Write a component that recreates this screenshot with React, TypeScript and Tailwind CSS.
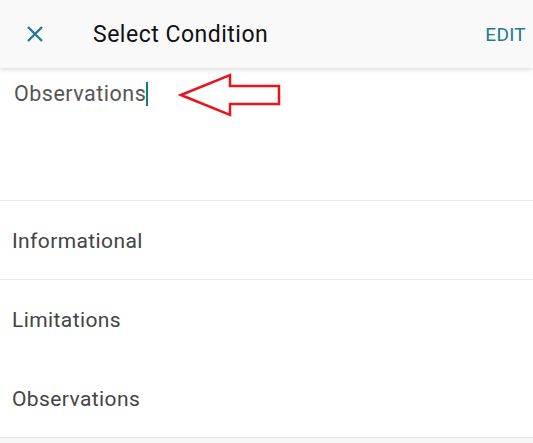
import React from "react";

const items = ["Informational", "Limitations", "Observations"];

export default function App() {
  return (
    <div
      className="w-[533px] h-[443px] bg-white overflow-hidden flex flex-col"
      style={{ fontFamily: "Roboto, 'Liberation Sans', sans-serif" }}
    >
      {/* Header */}
      <div className="h-[68px] shrink-0 bg-[#f9f9f9] flex items-center shadow-[0_2px_4px_rgba(0,0,0,0.12)] relative z-10">
        <div className="w-[70px] flex justify-center">
          <svg width="18" height="18" viewBox="0 0 18 18">
            <path d="M2 2L16 16M16 2L2 16" stroke="#1f7a93" strokeWidth="2.4" fill="none" />
          </svg>
        </div>
        <div className="ml-[23px] pt-[2px] text-[23px] tracking-[0.5px] text-[#111]">Select Condition</div>
        <div className="ml-auto mr-[7px] pt-[2px] text-[19px] tracking-[0.3px] text-[#1f7a93]">EDIT</div>
      </div>

      {/* Search input */}
      <div className="h-[133px] shrink-0 relative border-b border-[#ececec]">
        <div className="pl-[14px] pt-[10px] flex items-center text-[21.5px] tracking-[0.5px] text-[#555]">
          <span>Observations</span>
          <span className="w-[2px] h-[24px] bg-[#16806f]" />
        </div>
        <svg className="absolute left-[178px] top-[4px]" width="106" height="46" viewBox="0 0 106 46">
          <path
            d="M3 23 L52 3 L52 14 L101 14 L101 32 L52 32 L52 43 Z"
            fill="none"
            stroke="#e8161b"
            strokeWidth="2.5"
            strokeLinejoin="miter"
          />
        </svg>
      </div>

      {/* List */}
      {items.map((it, i) => (
        <div
          key={it}
          className={
            "h-[79px] shrink-0 flex items-center pl-[12px] pt-[3px] text-[21px] tracking-[0.4px] text-[#444] " +
            (i === 0 ? "border-b border-[#ececec]" : i === 2 ? "border-b border-[#e6e6e6]" : "")
          }
        >
          {it}
        </div>
      ))}
      <div className="flex-1 bg-[#f7f7f7]" />
    </div>
  );
}
